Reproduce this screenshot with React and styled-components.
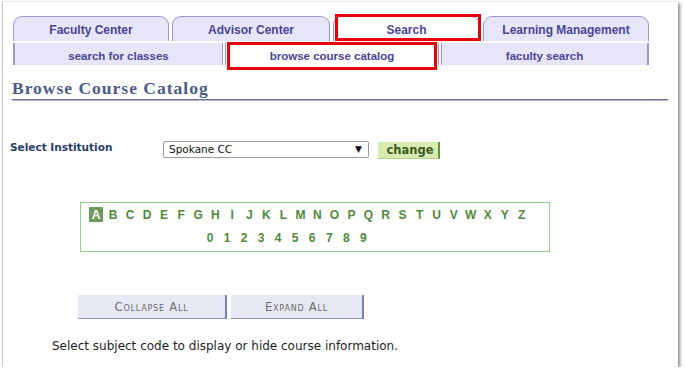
import React from "react";
import styled, { createGlobalStyle } from "styled-components";

const Global = createGlobalStyle`
  html, body { margin: 0; padding: 0; background: #fff; }
  body { font-family: "Liberation Sans", Arial, sans-serif; }
`;

const Frame = styled.div`
  margin: 1px 0 0 2px;
  width: 676px;
  height: 366px;
  border-left: 1px solid #c8c8c8;
  border-top: 1px solid #ececec;
  box-shadow: 2px 2px 3px rgba(0,0,0,0.45);
  box-sizing: border-box;
  background: #fff;
  overflow: hidden;
`;

const TabRow = styled.div`
  display: flex;
  gap: 3px;
  margin: 14px 0 0 10px;
  height: 25px;
`;

const Tab = styled.div`
  position: relative;
  box-sizing: border-box;
  width: ${p => p.$w}px;
  height: 25px;
  border: 1px solid #9c98cf;
  border-bottom: none;
  border-radius: 9px 9px 0 0;
  background: ${p => (p.$active ? "#fff" : "#e7e5f8")};
  color: #4a4496;
  font-weight: bold;
  font-size: 12px;
  display: flex;
  align-items: center;
  justify-content: center;
  padding-top: 2px;
`;

const Highlight = styled.span`
  position: absolute;
  pointer-events: none;
  border: 3px solid #e8000c;
  top: ${p => p.$t}px;
  left: ${p => p.$l}px;
  right: ${p => p.$r}px;
  bottom: ${p => p.$b}px;
`;

const SubRow = styled.div`
  display: flex;
  margin: 2px 0 0 10px;
  height: 22px;
`;

const SubTab = styled.div`
  position: relative;
  box-sizing: border-box;
  width: ${p => p.$w}px;
  height: 22px;
  background: ${p => (p.$active ? "#fff" : "#e7e5f8")};
  border-left: ${p => (p.$left ? "2px solid #9c98cf" : "none")};
  border-right: ${p => (p.$right ? "2px solid #9c98cf" : "none")};
  color: #4a4496;
  font-weight: bold;
  font-size: 11.5px;
  display: flex;
  align-items: center;
  justify-content: center;
  padding-top: 3px;
`;

const Divider = styled.div`
  width: 4px;
  height: 22px;
  box-sizing: border-box;
  border-left: 1px solid #9c98cf;
  border-right: 1px solid #9c98cf;
  background: #fff;
`;

const Title = styled.h1`
  margin: 13px 0 0 9px;
  width: 656px;
  font-family: "Liberation Serif", "Times New Roman", serif;
  font-weight: bold;
  font-size: 17.5px;
  letter-spacing: 1px;
  color: #4b5a8a;
  padding-bottom: 1px;
  border-bottom: 1px solid #6e7099;
  box-shadow: 0 1px 0 #b8b9cf;
  line-height: 20px;
`;

const InstRow = styled.div`
  display: flex;
  align-items: center;
  margin: 40px 0 0 7px;
  height: 18px;
`;

const Label = styled.div`
  width: 153px;
  font-family: "DejaVu Sans", Verdana, sans-serif;
  font-weight: bold;
  font-size: 10.5px;
  color: #283c6c;
  margin-top: -4px;
`;

const Select = styled.div`
  box-sizing: border-box;
  width: 206px;
  height: 17px;
  border: 1px solid #9a9a9a;
  border-radius: 2px;
  display: flex;
  align-items: center;
  justify-content: space-between;
  padding: 0 6px 0 5px;
  font-family: "DejaVu Sans", Verdana, sans-serif;
  font-size: 10.5px;
  color: #111;
`;

const Arrow = styled.span`
  font-size: 9px;
  color: #111;
`;

const ChangeBtn = styled.div`
  box-sizing: border-box;
  margin-left: 9px;
  width: 62px;
  height: 17px;
  margin-top: 2px;
  background: #d8ebb1;
  border-right: 2px solid #5f9b2c;
  border-bottom: 1px solid #b8d48f;
  color: #3d5a22;
  font-family: "DejaVu Sans", Verdana, sans-serif;
  font-weight: bold;
  font-size: 11.5px;
  display: flex;
  align-items: center;
  justify-content: center;
  padding-left: 4px;
`;

const AlphaBox = styled.div`
  box-sizing: border-box;
  margin: 44px 0 0 77px;
  width: 470px;
  height: 50px;
  border: 1px solid #8fd08c;
  padding: 4px 0 0 8px;
`;

const AlphaLine = styled.div`
  display: flex;
  gap: 3.04px;
  margin-left: ${p => p.$indent || 0}px;
  margin-top: ${p => p.$top || 0}px;
`;

const Letter = styled.span`
  width: 14px;
  height: 15px;
  display: flex;
  align-items: center;
  justify-content: center;
  font-weight: bold;
  font-size: 12px;
  color: ${p => (p.$sel ? "#fff" : "#4e8a3b")};
  background: ${p => (p.$sel ? "#6f9a5d" : "transparent")};
  border-radius: 1px;
`;

const BtnRow = styled.div`
  display: flex;
  gap: 4px;
  margin: 43px 0 0 75px;
`;

const GrayBtn = styled.div`
  box-sizing: border-box;
  width: ${p => p.$w}px;
  height: 24px;
  background: #e6e9f4;
  border-right: 2px solid #7683b5;
  border-bottom: 1px solid #8b95bf;
  display: flex;
  align-items: center;
  justify-content: center;
  font-family: "DejaVu Sans", Verdana, sans-serif;
  font-size: 11.5px;
  font-variant: small-caps;
  letter-spacing: 0.8px;
  color: #6b6b6b;
`;

const Note = styled.p`
  margin: 20px 0 0 49px;
  font-family: "DejaVu Sans", Verdana, sans-serif;
  font-size: 12px;
  color: #1e1e1e;
`;

const letters = "ABCDEFGHIJKLMNOPQRSTUVWXYZ".split("");
const digits = "0123456789".split("");

export default function App() {
  return (
    <>
      <Global />
      <Frame>
        <TabRow>
          <Tab $w={156}>Faculty Center</Tab>
          <Tab $w={158}>Advisor Center</Tab>
          <Tab $w={147} $active>
            Search
            <Highlight $t={-3} $l={1} $r={-2} $b={0} />
          </Tab>
          <Tab $w={166}>Learning Management</Tab>
        </TabRow>
        <SubRow>
          <SubTab $w={209} $left>search for classes</SubTab>
          <Divider />
          <SubTab $w={212} $active>
            browse course catalog
            <Highlight $t={-1} $l={1} $r={1} $b={-5} />
          </SubTab>
          <Divider />
          <SubTab $w={207} $right>faculty search</SubTab>
        </SubRow>
        <Title>Browse Course Catalog</Title>
        <InstRow>
          <Label>Select Institution</Label>
          <Select>
            <span>Spokane CC</span>
            <Arrow>▼</Arrow>
          </Select>
          <ChangeBtn>change</ChangeBtn>
        </InstRow>
        <AlphaBox>
          <AlphaLine>
            {letters.map((l, i) => (
              <Letter key={l} $sel={i === 0}>{l}</Letter>
            ))}
          </AlphaLine>
          <AlphaLine $indent={114} $top={8}>
            {digits.map(d => (
              <Letter key={d}>{d}</Letter>
            ))}
          </AlphaLine>
        </AlphaBox>
        <BtnRow>
          <GrayBtn $w={149}>Collapse All</GrayBtn>
          <GrayBtn $w={133}>Expand All</GrayBtn>
        </BtnRow>
        <Note>Select subject code to display or hide course information.</Note>
      </Frame>
    </>
  );
}
